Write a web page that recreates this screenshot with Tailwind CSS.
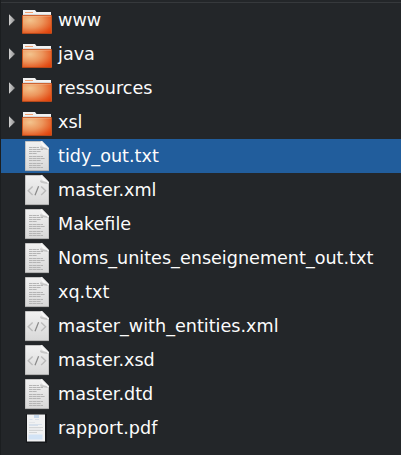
<!DOCTYPE html>
<html lang="fr">
<head>
<meta charset="utf-8">
<title>Fichiers</title>
<script src="https://cdn.jsdelivr.net/npm/@tailwindcss/browser@4"></script>
</head>
<body class="bg-[#232629] overflow-hidden">
<svg class="absolute h-0 w-0">
  <defs>
    <radialGradient id="orange" cx="0.25" cy="0.25" r="1"><stop offset="0" stop-color="#f3c48e"/><stop offset=".45" stop-color="#ec955c"/><stop offset=".85" stop-color="#e4541c"/><stop offset="1" stop-color="#e0420c"/></radialGradient>
    <linearGradient id="paper" x1="0" y1="0" x2="0" y2="1"><stop offset="0" stop-color="#f1f1f1"/><stop offset="1" stop-color="#d8d8d8"/></linearGradient>
    <linearGradient id="curl" x1="0" y1="1" x2="1" y2="0"><stop offset="0" stop-color="#9c9c9c"/><stop offset=".4" stop-color="#fdfdfd"/><stop offset="1" stop-color="#bdbdbd"/></linearGradient>
    <linearGradient id="arrowfill" x1="0" x2="1"><stop offset="0" stop-color="#d0d0d0"/><stop offset="1" stop-color="#8d8d8d"/></linearGradient>
    <symbol id="folder" viewBox="0 0 36 34">
      <path d="M5 7h12l1.5 2H33v5H5z" fill="#f2f2f2"/>
      <path d="M7 9.5h8" stroke="#f0a070" stroke-width="1"/>
      <path d="M5.5 11.5H32.5" stroke="#dadada"/>
      <rect x="4" y="13" width="30" height="18" rx=".8" fill="#a33d16"/>
      <rect x="4" y="12" width="30" height="18.5" rx=".8" fill="#c9541f"/>
      <rect x="5" y="13" width="28" height="17" fill="url(#orange)"/>
      <path d="M5 13.2h28" stroke="#f8c7a0" stroke-opacity=".6" stroke-width=".8"/>
    </symbol>
    <symbol id="page" viewBox="0 0 36 34">
      <path d="M7.5 2.5h16.2l6.8 6.8v22.2h-23z" fill="url(#paper)" stroke="#c4c4c4" stroke-width="1"/>
      <path d="M7 31.6h24" stroke="#aaa" stroke-width=".8"/>
      <path d="M22 7.5c0 3 3 2.8 8 3.5l-2-3z" fill="#999" fill-opacity=".45"/>
      <path d="M22.5 2c1.3 1.8 1.2 4 .5 6.4 2.6-.6 6 .2 8 2.2V9L24.2 2z" fill="url(#curl)"/>
    </symbol>
    <symbol id="text" viewBox="0 0 36 34">
      <use href="#page" width="36" height="34"/>
      <path d="M11 8.5h10M11 10.5h14M11 12.5h12M11 14.5h8M11 17.5h14M11 19.5h16M11 21.5h12M11 24.5h14M11 26.5h12M11 28.5h14" stroke="#b4b4b4" stroke-width="1" stroke-dasharray="3.6 .4"/>
    </symbol>
    <symbol id="code" viewBox="0 0 36 34">
      <use href="#page" width="36" height="34"/>
      <path d="M14.6 13.6l-4.4 4.2 4.4 4.2M23.2 13.6l4.4 4.2-4.4 4.2" fill="none" stroke="#bbb" stroke-width="1.4"/>
      <path d="M20.6 13.3l-3.6 9" stroke="#888" stroke-width="1.2"/>
    </symbol>
    <symbol id="pdf" viewBox="0 0 36 34">
      <rect x="8" y="3" width="21" height="29" fill="#0e1012" fill-opacity=".65"/>
      <rect x="9" y="3.5" width="18" height="27" fill="#f0f1f2"/>
      <path d="M16 4h5v3h-5z" fill="#c3d6ea"/>
      <path d="M11.5 8.5h3M17 8.5h4M11 13.5h13M11 14.5h9" stroke="#d0dce8" stroke-width=".8"/>
      <path d="M11 16.5h14M11 19.5h14M11 21.5h8" stroke="#c6c8ca" stroke-width=".7"/>
      <path d="M11 11.5h6M11 18h12" stroke="#e0e2e4" stroke-width=".8"/>
      <rect x="10.5" y="23.5" width="14" height="5" fill="#d2e3f5"/>
    </symbol>
    <symbol id="arrow" viewBox="0 0 18 34"><path d="M9 11.2l6 5.8-6 5.8z" fill="url(#arrowfill)"/></symbol>
  </defs>
</svg>
<main class="h-[455px] w-[401px] border-l border-[#1b1e20] text-[17.6px] leading-[34px] text-[#fcfcfc] font-['DejaVu_Sans',sans-serif]">
  <div class="h-[2px]"></div>
  <div class="h-px bg-[#36393c]"></div>
  <ul id="files">
  </ul>
</main>
<template id="row">
  <li class="flex h-[34px] items-center whitespace-nowrap">
    <svg class="h-[34px] w-[17px] shrink-0" viewBox="1 0 17 34"><use width="18" height="34"/></svg>
    <svg class="h-[34px] w-[36px] shrink-0" viewBox="0 0 36 34"><use width="36" height="34"/></svg>
    <span class="pl-1"></span>
  </li>
</template>
<script>
const files = [
  ["www", "folder"], ["java", "folder"], ["ressources", "folder"], ["xsl", "folder"],
  ["tidy_out.txt", "text", true], ["master.xml", "code"], ["Makefile", "text"],
  ["Noms_unites_enseignement_out.txt", "text"], ["xq.txt", "text"],
  ["master_with_entities.xml", "code"], ["master.xsd", "code"], ["master.dtd", "text"],
  ["rapport.pdf", "pdf"]
];
const list = document.getElementById("files");
for (const [name, icon, selected] of files) {
  const row = document.getElementById("row").content.cloneNode(true);
  const [arrow, image] = row.querySelectorAll("use");
  if (icon === "folder") arrow.setAttribute("href", "#arrow");
  image.setAttribute("href", "#" + icon);
  row.querySelector("span").textContent = name;
  if (selected) row.querySelector("li").classList.add("bg-[#215d9c]");
  list.append(row);
}
</script>
</body>
</html>
